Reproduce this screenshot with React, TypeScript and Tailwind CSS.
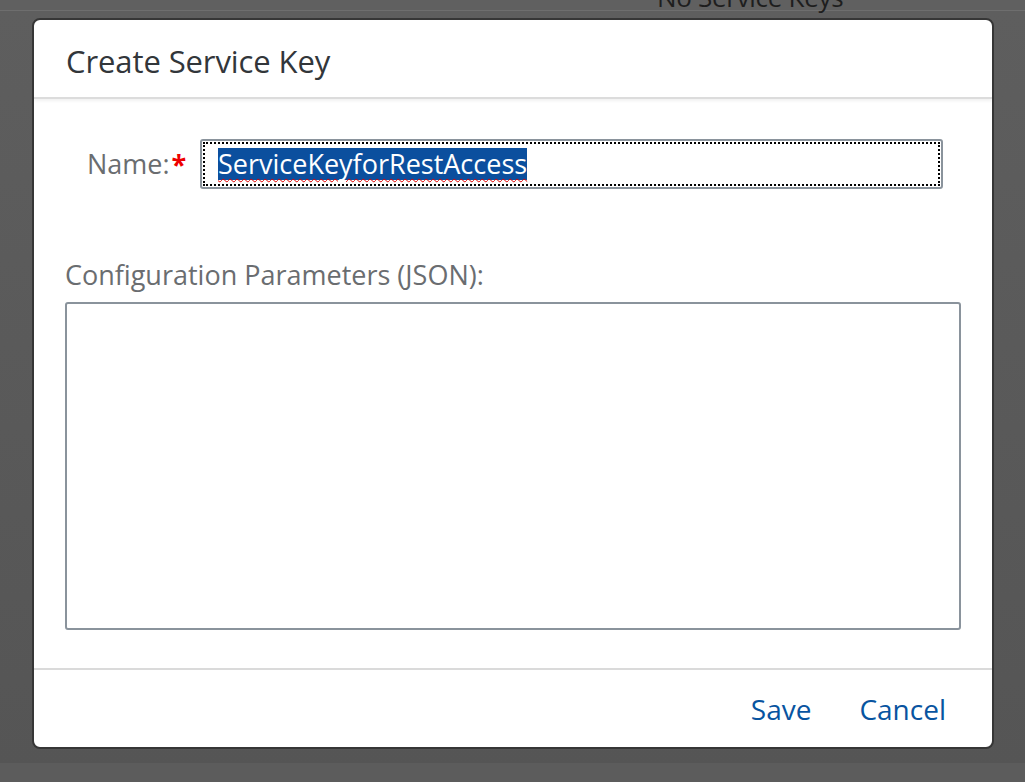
import React from "react";

export default function App() {
  const font = { fontFamily: '"Open Sans", "Liberation Sans", Arial, sans-serif' };
  return (
    <div className="relative h-[782px] w-[1025px] overflow-hidden bg-[#5c5c5c]" style={font}>
      {/* background page */}
      <div className="h-[30px] border-b border-[#6e6e6e] bg-[#606060]">
        <div className="ml-[657px] -mt-[19px] text-[26px] leading-[32px] tracking-[-0.3px] text-[#1e1e1e]">No Service Keys</div>
      </div>
      <div className="h-[752px] bg-gradient-to-b from-[#5e5e5e] to-[#555555]" />

      {/* dialog */}
      <div className="absolute left-[32px] top-[18px] flex h-[731px] w-[962px] flex-col overflow-hidden rounded-[8px] border-2 border-[#363636] bg-white">
        <div className="flex h-[79px] shrink-0 items-center border-b-2 border-[#dcdcdc] pl-[32px] shadow-[0_2px_3px_rgba(0,0,0,0.06)]">
          <h1 className="pt-[6px] text-[31px] font-normal tracking-[-0.1px] text-[#32363a]">Create Service Key</h1>
        </div>

        <div className="flex flex-1 flex-col pl-[31px] pr-[31px]">
          <div className="mt-[40px] flex items-center">
            <label className="ml-[22px] w-[113px] text-[27px] leading-[34px] text-[#6a6d70]">
              Name:<span className="ml-[2px] font-bold text-[#e00]">*</span>
            </label>
            <div className="flex h-[50px] w-[743px] items-center rounded-[3px] border-2 border-[#8a939c] p-[1px]">
              <div className="flex h-full w-full items-center border-2 border-dotted border-black pl-[13px]">
                <span className="bg-[#0b4f9e] text-[27px] leading-[32px] text-white underline decoration-wavy decoration-[#e00000] decoration-1 underline-offset-[4px]">
                  ServiceKeyforRestAccess
                </span>
              </div>
            </div>
          </div>

          <div className="mt-[69px] text-[27px] leading-[34px] text-[#6a6d70]">Configuration Parameters (JSON):</div>
          <div className="mt-[10px] h-[328px] w-[896px] rounded-[3px] border-2 border-[#8a939c]" />
        </div>

        <div className="flex h-[79px] shrink-0 items-center justify-end gap-[48px] border-t-2 border-[#dadada] pr-[46px] text-[28px] text-[#0854a0]">
          <span>Save</span>
          <span>Cancel</span>
        </div>
      </div>
    </div>
  );
}
